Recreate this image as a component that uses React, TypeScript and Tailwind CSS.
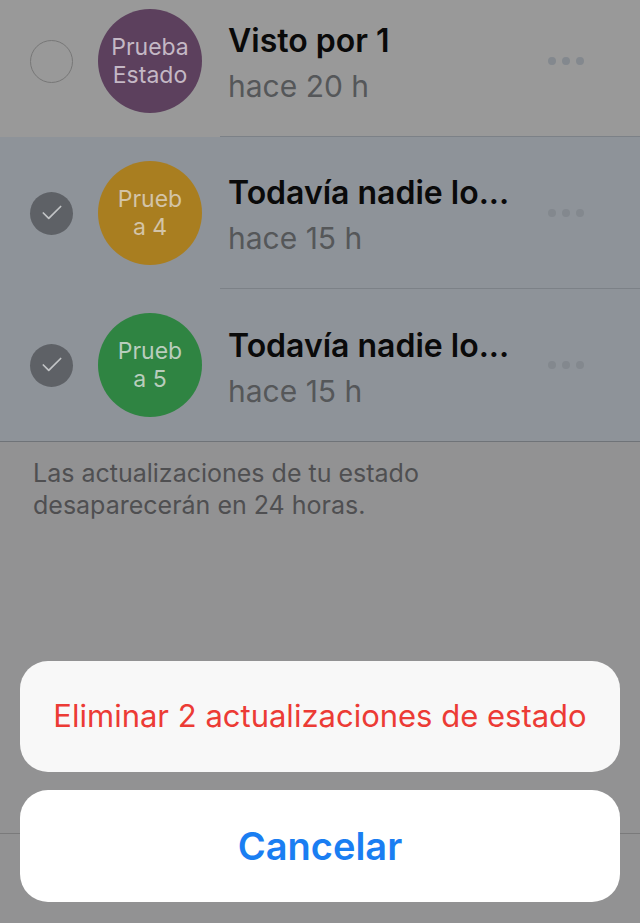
import { Check } from "lucide-react";

type Status = {
  title: string;
  time: string;
  avatar: [string, string];
  color: string;
  text: string;
  selected: boolean;
};

const statuses: Status[] = [
  {
    title: "Visto por 1",
    time: "hace 20 h",
    avatar: ["Prueba", "Estado"],
    color: "bg-[#5c405d]",
    text: "text-[#c4b8c5]",
    selected: false,
  },
  {
    title: "Todavía nadie lo...",
    time: "hace 15 h",
    avatar: ["Prueb", "a 4"],
    color: "bg-[#a97e20]",
    text: "text-[#d3c4a8]",
    selected: true,
  },
  {
    title: "Todavía nadie lo...",
    time: "hace 15 h",
    avatar: ["Prueb", "a 5"],
    color: "bg-[#2f8442]",
    text: "text-[#b9cdbd]",
    selected: true,
  },
];

function StatusRow({ item, last }: { item: Status; last: boolean }) {
  return (
    <div
      className={`flex h-[152px] items-stretch ${
        item.selected ? "bg-[#8e9399]" : "bg-[#999999]"
      }`}
    >
      <div className="flex items-center pl-[30px]">
        {item.selected ? (
          <div className="flex h-[43px] w-[43px] items-center justify-center rounded-full bg-[#5e6166]">
            <Check className="h-[26px] w-[26px] text-[#c2c4c6]" strokeWidth={1.6} />
          </div>
        ) : (
          <div className="h-[43px] w-[43px] rounded-full border-[1.5px] border-[#777777]" />
        )}
        <div
          className={`ml-[25px] flex h-[104px] w-[104px] flex-col items-center justify-center rounded-full text-[23px] leading-[28px] ${item.color} ${item.text}`}
        >
          <span>{item.avatar[0]}</span>
          <span>{item.avatar[1]}</span>
        </div>
      </div>
      <div
        className={`ml-[18px] flex flex-1 items-center pl-2 pr-[56px] ${
          last ? "" : "border-b border-[#7c8187]"
        }`}
      >
        <div className="flex-1 pt-[6px]">
          <div className="text-[32px] font-semibold leading-[38px] text-[#0a0a0a]">
            {item.title}
          </div>
          <div className="mt-[7px] text-[30px] leading-[38px] text-[#555759]">
            {item.time}
          </div>
        </div>
        <div className="flex gap-[6px]">
          <span className="h-[8px] w-[8px] rounded-full bg-[#83888e]" />
          <span className="h-[8px] w-[8px] rounded-full bg-[#83888e]" />
          <span className="h-[8px] w-[8px] rounded-full bg-[#83888e]" />
        </div>
      </div>
    </div>
  );
}

export default function App() {
  return (
    <div
      className="relative flex h-[923px] w-[640px] flex-col overflow-hidden bg-[#929293]"
      style={{ fontFamily: "Inter, 'Liberation Sans', sans-serif" }}
    >
      <div className="-mt-[15px] border-b border-[#6f7378]">
        {statuses.map((s, i) => (
          <StatusRow key={i} item={s} last={i === statuses.length - 1} />
        ))}
      </div>

      <div className="flex-1 px-[33px] pt-[15px]">
        <p className="text-[25px] leading-[32px] text-[#4f4f51]">
          Las actualizaciones de tu estado
          <br />
          desaparecerán en 24 horas.
        </p>
      </div>

      <div className="h-[90px] border-t border-[#7a7a7b]" />

      {/* action sheet */}
      <div className="absolute inset-x-0 bottom-0 flex flex-col gap-[18px] px-5 pb-[21px]">
        <button className="flex h-[111px] items-center justify-center rounded-[28px] bg-[#f8f8f8] text-[31px] text-[#ec3b35]">
          Eliminar 2 actualizaciones de estado
        </button>
        <button className="flex h-[112px] items-center justify-center rounded-[28px] bg-white text-[38px] font-semibold text-[#1a7ef2]">
          Cancelar
        </button>
      </div>
    </div>
  );
}
